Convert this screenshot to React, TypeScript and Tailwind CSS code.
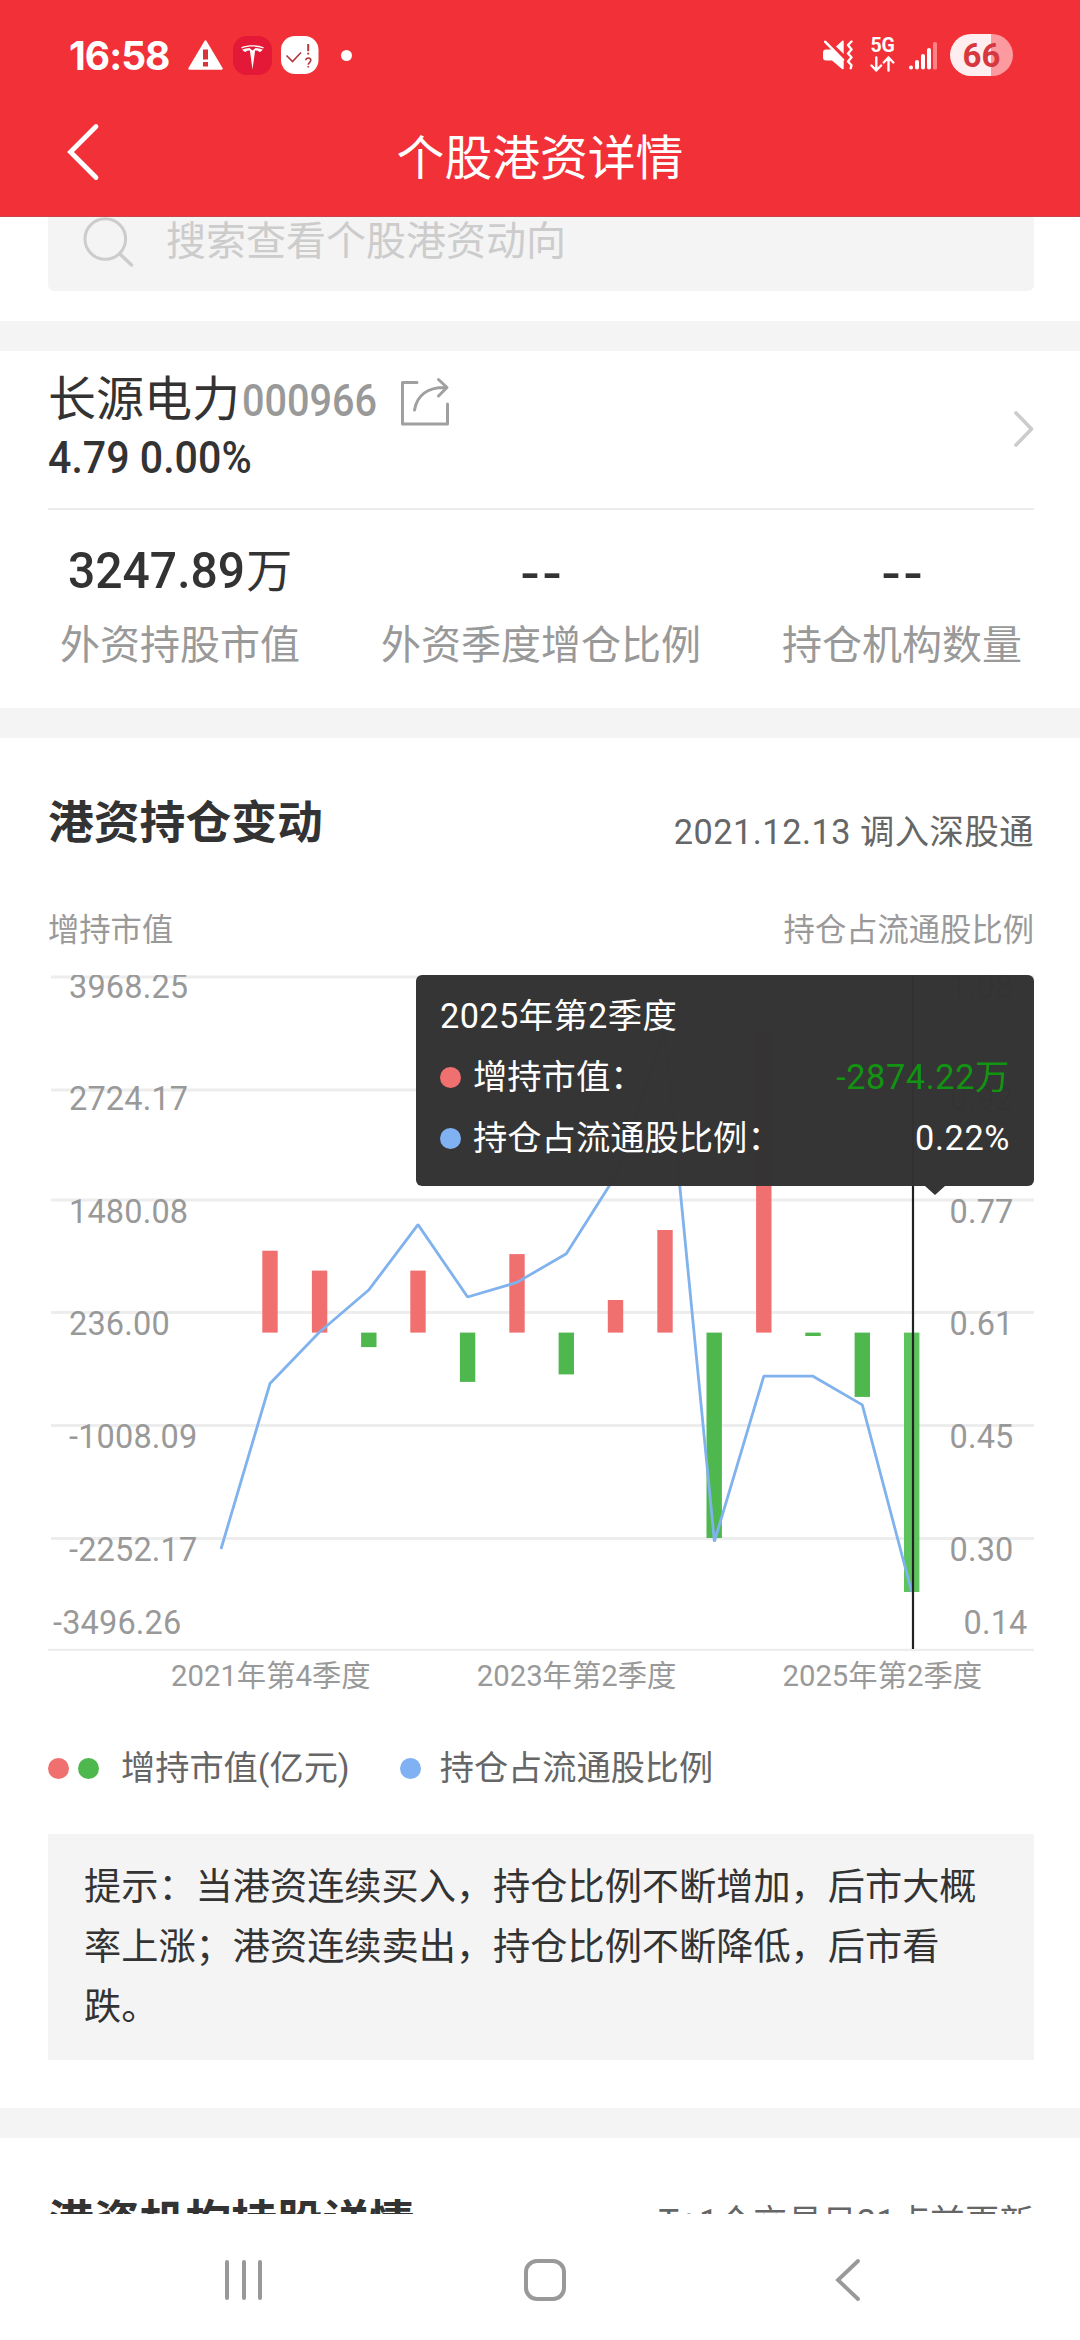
import React from "react";

const BASE_Y = 357.6;
const GRID_Y = [0.5, 113.5, 223.5, 336, 449, 562];
const LEFT_LABELS = ["3968.25", "2724.17", "1480.08", "236.00", "-1008.09", "-2252.17"];
const RIGHT_LABELS = ["1.08", "0.92", "0.77", "0.61", "0.45", "0.30"];
const QUARTERS = ["2021年第4季度", "2023年第2季度", "2025年第2季度"];

const BARS = [
  { x: 270, y: 275.7 },
  { x: 319.6, y: 295.6 },
  { x: 368.8, y: 372.1 },
  { x: 418, y: 295.6 },
  { x: 467.6, y: 406.9 },
  { x: 517, y: 279.1 },
  { x: 566.3, y: 399.4 },
  { x: 615.5, y: 325 },
  { x: 665, y: 255 },
  { x: 714.2, y: 563 },
  { x: 763.8, y: 55.7 },
  { x: 813, y: 361 },
  { x: 862.3, y: 421.9 },
  { x: 911.7, y: 617 },
];

const LINE =
  "221,574 270,408.5 319.6,357 369,314.7 418,249.6 467.6,322 517,307.4 566.3,278.7 615.5,201 664.5,54 714.4,566.5 763.8,401.2 813,401.2 862.3,429.9 911.7,617";

function StatusBar() {
  return (
    <div className="flex h-[110px] items-center pl-[69px] pr-[67px] text-white">
      <span className="w-[103px] font-['Inter'] text-[39px] font-bold leading-none tracking-[-1px]">16:58</span>
      <svg className="ml-4 h-[30px] w-[35px]" viewBox="0 0 35 30">
        <path d="M17.5 1.5 33.5 28.500H1.500Z" fill="#fff" stroke="#fff" strokeWidth="2.400" strokeLinejoin="round" />
        <path d="M15 9.500h5v10h-5ZM15 22h5v4.400h-5Z" fill="#d8343a" />
      </svg>
      <svg className="ml-[10px] h-[39px] w-[39px]" viewBox="0 0 39 39">
        <rect width="39" height="39" rx="14" fill="#e31937" />
        <path d="M8.200 11.200c7-2.600 15.600-2.600 22.600 0l-.6 1.200c-6.600-2.400-14.800-2.400-21.400 0Z" fill="#fff" />
        <path d="M9.300 13.600c2.300-1.100 5-1.500 7.200-1.600l3 2.500 3-2.500c2.200.1 4.900.5 7.200 1.600-.7 1.700-2 2.300-3.600 2.300-.4-1.200-2-1.500-4-1.500l-2.600 19.200-2.600-19.200c-2 0-3.600.3-4 1.500-1.600 0-2.900-.6-3.600-2.300Z" fill="#fff" />
      </svg>
      <svg className="ml-[9px] h-[38px] w-[38px]" viewBox="0 0 38 38">
        <rect width="37.500" height="38" rx="14" fill="#fff" />
        <path d="M5.500 19.500 11.500 25.500 20 16.500" fill="none" stroke="#b5373d" strokeWidth="1.600" />
        <path d="M27.200 8v7.200M27.200 16.800v1.600" fill="none" stroke="#b5373d" strokeWidth="2" />
        <path d="M24.800 24.300c0-3.200 5-3 5 0 0 2-2.500 2.200-2.500 4.400M27.300 30v1.600" fill="none" stroke="#b5373d" strokeWidth="1.600" />
      </svg>
      <span className="ml-[22px] h-[11px] w-[11px] rounded-full bg-white" />
      <div className="ml-auto flex items-center">
        <svg className="h-[30px] w-[31px]" viewBox="0 0 31 30">
          <path d="M3 9.500h6L20.700 21.500V28.500c0 1-1 1-1.700.4L9 20.500H3c-2 0-3-1-3-3v-5c0-2 1-3 3-3Z" fill="#fff" />
          <path d="M13 6.500 19.300.8c.7-.6 1.400-.3 1.400.6V14Z" fill="#fff" />
          <path d="M2.300 1.800 20 19.800" stroke="#fff" strokeWidth="2.600" strokeLinecap="round" />
          <path d="M28.500 1.500 25 5l3.500 4.500L25 13.500l3.500 3.700-3.500 4.300 3.500 3.700-.8 3" fill="none" stroke="#fff" strokeWidth="2.400" strokeLinecap="round" strokeLinejoin="round" />
        </svg>
        <div className="ml-4 flex w-[25px] flex-col items-center">
          <span className="font-['Roboto'] text-[19.500px] font-bold leading-[16px] tracking-[-0.3px]">5G</span>
          <svg className="mt-[2px] h-[16px] w-[25px]" viewBox="0 0 25 16">
            <path d="M6.300 1.500v13M1.500 9.500l4.800 5 4.800-5M18.500 14.500v-13M13.700 6.500l4.800-5 4.800 5" fill="none" stroke="#fff" strokeWidth="2.400" strokeLinecap="round" strokeLinejoin="round" />
          </svg>
        </div>
        <svg className="ml-[14px] h-[30px] w-[28px]" viewBox="0 0 28 30">
          <rect x="0" y="25.500" width="4" height="4" rx="2" fill="#fff" />
          <rect x="6" y="20" width="4" height="9.500" rx="2" fill="#fff" />
          <rect x="12" y="14" width="4" height="15.500" rx="2" fill="#fff" />
          <rect x="18" y="8" width="4" height="21.500" rx="2" fill="#fff" />
          <rect x="24" y="2" width="4" height="27.500" rx="1.500" fill="#ff8287" />
        </svg>
        <div className="ml-[13px] flex h-[42px] w-[63px] items-center justify-center overflow-hidden rounded-full bg-[linear-gradient(90deg,#ffeeef_65%,#fb9ba0_65%)]">
          <span className="font-['Roboto'] text-[33px] font-bold leading-none text-[#d63840]">66</span>
        </div>
      </div>
    </div>
  );
}

function Header() {
  return (
    <header className="h-[217px] shrink-0 border-b border-[#cb4249] bg-[#f23037]">
      <StatusBar />
      <div className="grid h-[94px] grid-cols-[200px_1fr_200px] items-center">
        <svg className="mb-[11px] ml-[64px] h-[60px] w-[38px]" viewBox="0 0 38 60">
          <path d="M32 4.500 6.500 30 32 55.500" fill="none" stroke="#fff" strokeWidth="4.800" strokeLinecap="round" />
        </svg>
        <h1 className="pt-[5px] text-center text-[47.800px] leading-none text-white">个股港资详情</h1>
      </div>
    </header>
  );
}

function Search() {
  return (
    <div className="mx-[48px] -mt-[28px] mb-[30px] flex h-[102px] w-[986px] shrink-0 items-center rounded-md bg-[#f4f4f4]">
      <svg className="ml-[35px] mt-[4px] h-[52px] w-[52px]" viewBox="0 0 52 52">
        <circle cx="22.300" cy="23" r="20.300" fill="none" stroke="#ccc" strokeWidth="3" />
        <path d="M37 38 48.500 49" stroke="#ccc" strokeWidth="3.500" strokeLinecap="round" />
      </svg>
      <span className="ml-[31px] pt-[3px] text-[40px] leading-none text-[#ccc]">搜索查看个股港资动向</span>
    </div>
  );
}

function Metric({ value, label }: { value: React.ReactNode; label: string }) {
  return (
    <div className="flex flex-col items-center">
      <div className="flex h-[60px] items-center justify-center text-[#333]">{value}</div>
      <div className="mt-[25px] text-[40px] leading-[40px] text-[#999]">{label}</div>
    </div>
  );
}

function Dashes() {
  return (
    <span className="pl-[2px] font-['Liberation_Sans'] text-[60px] leading-none tracking-[2px]">--</span>
  );
}

function StockCard() {
  return (
    <section className="h-[357px] shrink-0 pl-[48px] pr-[46px]">
      <div className="flex h-[159px] items-center border-b-2 border-[#ededed]">
        <div className="flex flex-1 flex-col">
          <div className="flex h-[48px] items-center">
            <span className="pt-[2px] text-[48px] leading-none text-[#333]">长源电力</span>
            <span className="w-[160px] pl-[2px] pt-[5px]">
              <span className="inline-block origin-left scale-x-[0.9] font-['Roboto'] text-[44px] font-medium leading-none text-[#999]">000966</span>
            </span>
            <svg className="mt-[6px] h-[50px] w-[50px]" viewBox="0 0 50 50">
              <path d="M17 5.500H2.500V47H47.500V27" fill="none" stroke="#a0a0a0" strokeWidth="3" strokeLinejoin="round" strokeLinecap="round" />
              <path d="M14.500 33C17 18 28 10 46 10.500M38.500 2.500 47 10.500 38.500 19" fill="none" stroke="#a0a0a0" strokeWidth="3" strokeLinecap="round" strokeLinejoin="round" />
            </svg>
          </div>
          <div className="flex h-[62px] items-end pb-[5px]">
            <span className="inline-block origin-left scale-x-[0.935] font-['Roboto'] text-[44px] font-medium leading-none text-[#333]">4.79 0.00%</span>
          </div>
        </div>
        <svg className="h-[40px] w-[21px]" viewBox="0 0 21 40">
          <path d="M3 3 18.500 19 3 35" fill="none" stroke="#ccc" strokeWidth="3.600" strokeLinecap="round" strokeLinejoin="round" />
        </svg>
      </div>
      <div className="flex justify-between px-[12px] pt-[31px]">
        <Metric
          label="外资持股市值"
          value={
            <>
              <span className="-mr-[6px] inline-block origin-left scale-x-[0.96] font-['Roboto'] text-[50px] font-medium leading-none">3247.89</span>
              <span className="text-[46px] leading-none">万</span>
            </>
          }
        />
        <Metric label="外资季度增仓比例" value={<Dashes />} />
        <Metric label="持仓机构数量" value={<Dashes />} />
      </div>
    </section>
  );
}

function Tooltip() {
  return (
    <div className="absolute left-[416px] top-0 h-[211px] w-[618px] rounded-md bg-[#323232]/[0.985] pl-[24px] pr-[24px] text-[34.300px] text-white">
      <div className="flex h-[83px] items-center tracking-[0.4px]">2025年第2季度</div>
      <div className="-mt-[11px] flex h-[61px] items-center">
        <span className="mr-[12px] h-[21px] w-[21px] rounded-full bg-[#f07070]" />
        <span>增持市值：</span>
        <span className="ml-auto tracking-[0.6px] text-[#129312]">-2874.22万</span>
      </div>
      <div className="flex h-[61px] items-center">
        <span className="mr-[12px] h-[21px] w-[21px] rounded-full bg-[#80b2f3]" />
        <span>持仓占流通股比例：</span>
        <span className="ml-auto tracking-[0.6px]">0.22%</span>
      </div>
      <div className="absolute left-[509px] top-[211px] border-x-[10px] border-t-[9px] border-x-transparent border-t-[#353535]" />
    </div>
  );
}

function Chart() {
  return (
    <div className="relative h-[676px] w-[1080px] shrink-0">
      <svg className="h-[676px] w-[1080px]" viewBox="0 0 1080 676">
        {GRID_Y.map((y) => (
          <path key={y} d={`M51 ${y + 1.5}H1034`} stroke="#ededed" strokeWidth="3" />
        ))}
        <path d="M48 675H1034" stroke="#ededed" strokeWidth="2.500" />
        {BARS.map((b, i) => {
          const up = b.y < BASE_Y;
          return (
            <rect
              key={b.x}
              x={b.x - 7.7}
              y={up ? b.y : BASE_Y}
              width="15.400"
              height={Math.abs(b.y - BASE_Y)}
              fill={up ? "#f07070" : i === BARS.length - 1 ? "#5dc45d" : "#4eb84e"}
            />
          );
        })}
        <polyline points={LINE} fill="none" stroke="#80b2ee" strokeWidth="2.800" strokeLinejoin="bevel" />
        <g fill="#999" className="font-['Roboto'] text-[32.500px] tracking-[0.15px]">
          {LEFT_LABELS.map((t, i) => (
            <text key={t} x="69" y={22.5 + i * 112.6}>{t}</text>
          ))}
          <text x="53" y="658.500">-3496.26</text>
          {RIGHT_LABELS.map((t, i) => (
            <text key={t} x="949.500" y={22.5 + i * 112.6}>{t}</text>
          ))}
          <text x="963.500" y="658.500">0.14</text>
        </g>
        <path d="M913 1V674" stroke="#222" strokeWidth="2.200" />
      </svg>
      <Tooltip />
    </div>
  );
}

function Dot({ color }: { color: string }) {
  return <span className={`h-[21px] w-[21px] shrink-0 rounded-full ${color}`} />;
}

function Holdings() {
  return (
    <section className="flex h-[1370px] shrink-0 flex-col">
      <div className="flex h-[146px] justify-between pl-[48px] pr-[46px] pt-[63px]">
        <h2 className="text-[45.800px] font-bold leading-[46px] text-[#333]">港资持仓变动</h2>
        <span className="mt-[13px] text-[34.300px] leading-[36px] tracking-[0.5px] text-[#666]">2021.12.13 调入深股通</span>
      </div>
      <div className="flex h-[91px] items-center justify-between pl-[48px] pr-[46px] pt-[3px] text-[31.300px] leading-none text-[#999]">
        <span>增持市值</span>
        <span>持仓占流通股比例</span>
      </div>
      <Chart />
      <div className="flex justify-between pl-[171px] pr-[98px] pt-[8px] text-[29.300px] leading-[34px] text-[#999]">
        {QUARTERS.map((q) => (
          <span key={q}>{q}</span>
        ))}
      </div>
      <div className="mt-[58px] flex h-[34px] items-center pl-[48px] text-[34.200px] leading-none text-[#666]">
        <Dot color="bg-[#f07070]" />
        <span className="w-[9px]" />
        <Dot color="bg-[#4eb84e]" />
        <span className="ml-[22px]">增持市值(亿元)</span>
        <span className="w-[50px]" />
        <Dot color="bg-[#80b2f3]" />
        <span className="ml-[19px]">持仓占流通股比例</span>
      </div>
      <p className="ml-[48px] mr-[46px] mt-[49px] h-[226px] bg-[#f4f4f4] px-[36px] pt-[23px] text-[37.200px] leading-[60px] text-[#333]">
        提示：当港资连续买入，持仓比例不断增加，后市大概率上涨；港资连续卖出，持仓比例不断降低，后市看跌。
      </p>
    </section>
  );
}

function NavBar() {
  return (
    <nav className="flex h-[126px] shrink-0 items-center justify-between bg-white pl-[225px] pr-[218px] pt-[5px]">
      <div className="flex w-[40px] gap-[12.700px]">
        <span className="h-[40px] w-[4px] shrink-0 rounded-full bg-[#999]" />
        <span className="h-[40px] w-[4px] shrink-0 rounded-full bg-[#999]" />
        <span className="h-[40px] w-[4px] shrink-0 rounded-full bg-[#999]" />
      </div>
      <span className="mr-[9px] h-[42px] w-[42px] rounded-[13px] border-4 border-[#999]" />
      <svg className="h-[44px] w-[28px]" viewBox="0 0 28 44">
        <path d="M24 3 4 22 24 41" fill="none" stroke="#999" strokeWidth="3.800" strokeLinecap="round" />
      </svg>
    </nav>
  );
}

export default function App() {
  return (
    <div className="flex h-[2340px] w-[1080px] flex-col overflow-hidden bg-white font-['Roboto','Noto_Sans_CJK_SC',sans-serif]">
      <Header />
      <main className="flex min-h-0 flex-1 flex-col overflow-hidden">
        <Search />
        <div className="h-[30px] shrink-0 bg-[#f4f4f4]" />
        <StockCard />
        <div className="h-[30px] shrink-0 bg-[#f4f4f4]" />
        <Holdings />
        <div className="h-[30px] shrink-0 bg-[#f4f4f4]" />
        <section className="flex h-[146px] shrink-0 justify-between pl-[48px] pr-[46px] pt-[62px]">
          <h2 className="text-[45.800px] font-bold leading-[46px] text-[#333]">港资机构持股详情</h2>
          <span className="mt-[4px] text-[34.300px] leading-[36px] tracking-[0.25px] text-[#666]">T+1个交易日21点前更新</span>
        </section>
      </main>
      <NavBar />
    </div>
  );
}
